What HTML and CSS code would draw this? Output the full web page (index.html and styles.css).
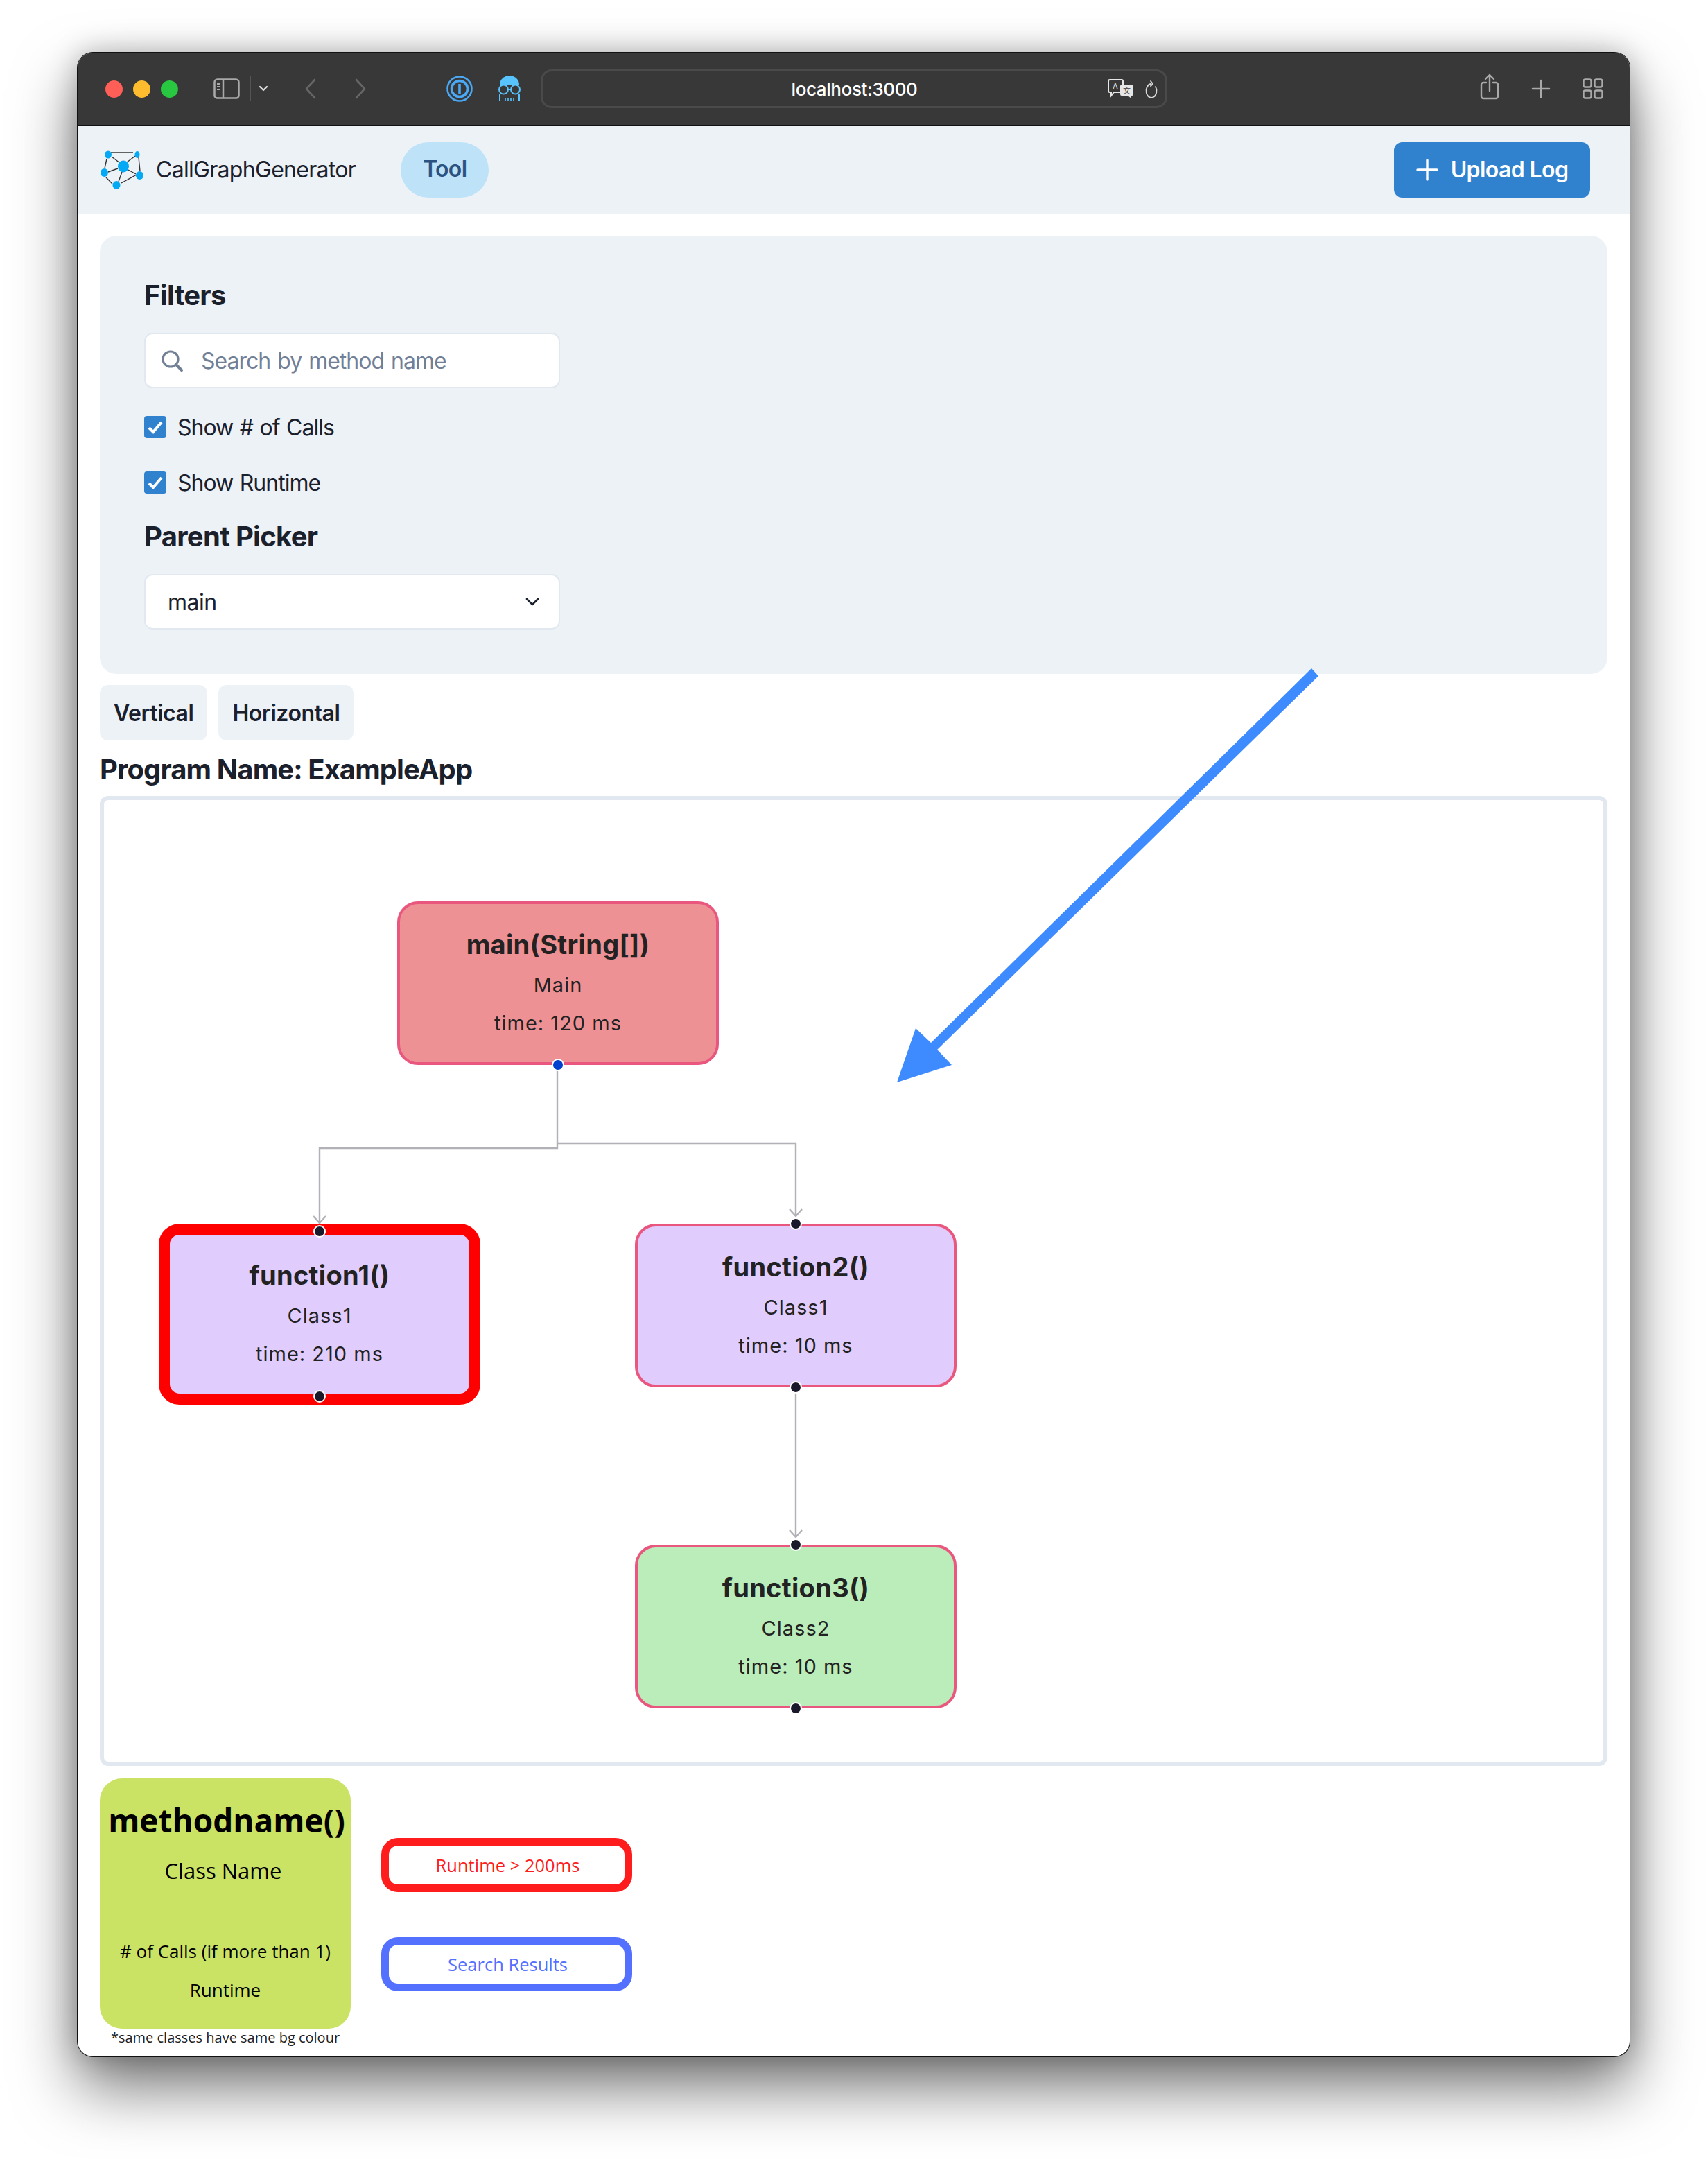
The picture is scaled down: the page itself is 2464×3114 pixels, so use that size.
FILE: index.html
```html
<!DOCTYPE html>
<html lang="en">
<head>
    <meta charset="UTF-8">
    <title>CallGraphGenerator</title>
    <link rel="stylesheet" href="styles.css">
</head>
<body>

    <div class="window">

        <div class="titlebar">
            <div class="lights">
                <span class="light red"></span>
                <span class="light yellow"></span>
                <span class="light green"></span>
            </div>
            <svg class="sidebar-icon" viewBox="0 0 38 30" fill="none" stroke="#a9a9a9" stroke-width="2.5">
                <rect x="1.5" y="1.5" width="35" height="27" rx="4"/>
                <path d="M14 2v26"/>
                <path d="M5 8h5M5 12h5M5 16h5" stroke-width="2"/>
            </svg>
            <span class="bar-sep"></span>
            <svg class="drop-icon" viewBox="0 0 14 10" fill="none" stroke="#d8d8d8" stroke-width="2.4" stroke-linecap="round" stroke-linejoin="round">
                <path d="M2 2l5 5 5-5"/>
            </svg>
            <svg class="back-icon" viewBox="0 0 16 32" fill="none" stroke="#666" stroke-width="2.6" stroke-linecap="round" stroke-linejoin="round">
                <path d="M14 3L2 16l12 13"/>
            </svg>
            <svg class="forward-icon" viewBox="0 0 16 32" fill="none" stroke="#666" stroke-width="2.6" stroke-linecap="round" stroke-linejoin="round">
                <path d="M2 3l12 13L2 29"/>
            </svg>
            <svg class="onepw-icon" viewBox="0 0 38 38" fill="none" stroke="#4aa8f5">
                <circle cx="19" cy="19" r="17.500" stroke-width="2.600"/>
                <circle cx="19" cy="19" r="11.500" stroke-width="3.600"/>
                <path d="M19 12v14" stroke-width="3.600"/>
            </svg>
            <svg class="ghost-icon" viewBox="0 0 36 38" fill="none" stroke="#58c4ff" stroke-width="2">
                <path d="M4 13a14 13 0 0 1 28 0z" fill="#58c4ff" stroke="none"/>
                <circle cx="9.500" cy="20" r="6.500"/>
                <circle cx="26.500" cy="20" r="6.500"/>
                <path d="M16 20h4M4 26v11M32 26v11"/>
                <path d="M12 32v4M16 32v4M20 32v4M24 32v4" stroke-width="1.600"/>
            </svg>
            <div class="url-bar">
                <span class="url-text">localhost:3000</span>
                <svg class="translate-icon" viewBox="0 0 38 28">
                    <path d="M3 1h17a2 2 0 0 1 2 2v14a2 2 0 0 1-2 2H9l-4 5v-5H3a2 2 0 0 1-2-2V3a2 2 0 0 1 2-2z" fill="#383838" stroke="#e6e6e6" stroke-width="2"/>
                    <text x="11" y="15" class="translate-a">A</text>
                    <path d="M20 8h15a2 2 0 0 1 2 2v12a2 2 0 0 1-2 2h-1v4l-5-4h-9a2 2 0 0 1-2-2V10a2 2 0 0 1 2-2z" fill="#e6e6e6"/>
                    <text x="27.500" y="21" class="translate-b">文</text>
                </svg>
                <svg class="reload-icon" viewBox="0 0 20 28" fill="none" stroke="#d8d8d8" stroke-width="1.800" stroke-linecap="round" stroke-linejoin="round">
                    <path d="M16 10a7.500 10 0 1 1-7-4"/>
                    <path d="M9 2l3 4-3 3"/>
                </svg>
            </div>
            <div class="bar-right">
                <svg class="share-icon" viewBox="0 0 28 38" fill="none" stroke="#a9a9a9" stroke-width="2.400" stroke-linecap="round" stroke-linejoin="round">
                    <path d="M9 13H5a3 3 0 0 0-3 3v17a3 3 0 0 0 3 3h18a3 3 0 0 0 3-3V16a3 3 0 0 0-3-3h-4"/>
                    <path d="M14 25V2M8 8l6-6 6 6"/>
                </svg>
                <svg class="plus-icon" viewBox="0 0 28 28" fill="none" stroke="#a9a9a9" stroke-width="2.600" stroke-linecap="round">
                    <path d="M14 2v24M2 14h24"/>
                </svg>
                <svg class="tabs-icon" viewBox="0 0 30 30" fill="none" stroke="#a9a9a9" stroke-width="2.400">
                    <rect x="1.500" y="1.500" width="11" height="11" rx="2.500"/>
                    <rect x="17.500" y="1.500" width="11" height="11" rx="2.500"/>
                    <rect x="1.500" y="17.500" width="11" height="11" rx="2.500"/>
                    <rect x="17.500" y="17.500" width="11" height="11" rx="2.500"/>
                </svg>
            </div>
        </div>

        <nav class="navbar">
            <svg class="logo" viewBox="0 0 64 56" stroke="#333" stroke-width="1.400" fill="#03a9f4">
                <path d="M15 3h32M9 12l-3 14M55 10l2 20M28 18L16 9M38 17L50 8M25 26l-14 5M40 28l11 6M31 31l-5 14M8 39l9 9M30 47l22-12" fill="none"/>
                <g stroke="none">
                    <ellipse cx="11" cy="6" rx="5" ry="5.500"/>
                    <ellipse cx="53" cy="6" rx="3.500" ry="5"/>
                    <ellipse cx="33" cy="23" rx="8" ry="8.500"/>
                    <ellipse cx="5.500" cy="32" rx="5.500" ry="6"/>
                    <ellipse cx="56.500" cy="36" rx="5.500" ry="6"/>
                    <ellipse cx="23" cy="50" rx="5.500" ry="6"/>
                </g>
            </svg>
            <span class="brand">CallGraphGenerator</span>
            <a class="nav-pill">Tool</a>
            <button type="button" class="upload-btn">
                <svg viewBox="0 0 32 32" fill="none" stroke="#fff" stroke-width="3.400" stroke-linecap="round">
                    <path d="M16 2v28M2 16h28"/>
                </svg>
                Upload Log
            </button>
        </nav>

        <main class="content">

            <section class="filters">
                <h2 class="panel-title">Filters</h2>
                <div class="search-box">
                    <svg viewBox="0 0 32 32" fill="none" stroke="#718096" stroke-width="3.200" stroke-linecap="round">
                        <circle cx="14" cy="14" r="11"/>
                        <path d="M22 22l8 8" stroke-width="4"/>
                    </svg>
                    <input type="text" placeholder="Search by method name">
                </div>
                <label class="check-row first">
                    <span class="check-box">
                        <svg viewBox="0 0 32 32" fill="none" stroke="#fff" stroke-width="4"><path d="M7 17l6 6L25 9"/></svg>
                    </span>
                    Show # of Calls
                </label>
                <label class="check-row">
                    <span class="check-box">
                        <svg viewBox="0 0 32 32" fill="none" stroke="#fff" stroke-width="4"><path d="M7 17l6 6L25 9"/></svg>
                    </span>
                    Show Runtime
                </label>
                <h2 class="panel-title parent-title">Parent Picker</h2>
                <div class="select-box">
                    <select>
                        <option>main</option>
                    </select>
                    <svg viewBox="0 0 20 12" fill="none" stroke="#1a202c" stroke-width="2.600" stroke-linecap="round" stroke-linejoin="round">
                        <path d="M2 2l8 8 8-8"/>
                    </svg>
                </div>
            </section>

            <div class="layout-btns">
                <button type="button">Vertical</button>
                <button type="button">Horizontal</button>
            </div>

            <h2 class="program-name">Program Name: ExampleApp</h2>

            <div class="graph">
                <svg class="edges" viewBox="0 0 2163 1387" fill="none" stroke="#b1b1b7" stroke-width="2.400">
                    <path d="M654 380V502H311V611"/>
                    <path d="M302 600l9 10 9-10"/>
                    <path d="M654 495H998V600"/>
                    <path d="M989 590l9 10 9-10"/>
                    <path d="M998 844V1063"/>
                    <path d="M989 1053l9 10 9-10"/>
                </svg>

                <div class="node node-main node-red">
                    <span class="handle bottom blue"></span>
                    <h3>main(String[])</h3>
                    <p>Main</p>
                    <p>time: 120 ms</p>
                </div>
                <div class="node node-one node-purple slow">
                    <span class="handle top"></span>
                    <h3>function1()</h3>
                    <p>Class1</p>
                    <p>time: 210 ms</p>
                    <span class="handle bottom"></span>
                </div>
                <div class="node node-two node-purple">
                    <span class="handle top"></span>
                    <h3>function2()</h3>
                    <p>Class1</p>
                    <p>time: 10 ms</p>
                    <span class="handle bottom"></span>
                </div>
                <div class="node node-three node-green">
                    <span class="handle top"></span>
                    <h3>function3()</h3>
                    <p>Class2</p>
                    <p>time: 10 ms</p>
                    <span class="handle bottom"></span>
                </div>
            </div>

            <div class="legend">
                <div class="legend-left">
                    <div class="legend-card">
                        <div class="legend-title">methodname()</div>
                        <div class="legend-class">Class Name</div>
                        <div class="legend-calls">&#35; of Calls (if more than 1)</div>
                        <div class="legend-runtime">Runtime</div>
                    </div>
                    <div class="legend-note">*same classes have same bg colour</div>
                </div>
                <div class="legend-keys">
                    <div class="key key-red">Runtime &gt; 200ms</div>
                    <div class="key key-blue">Search Results</div>
                </div>
            </div>

        </main>
    </div>

    <svg class="annotation" viewBox="0 0 2464 3114">
        <polygon points="1892,964 1902,975 1352,1514 1373,1536 1294,1561 1321,1483 1343,1504" fill="#3d8bff"/>
    </svg>

</body>
</html>
```

FILE: styles.css
```css
* {
    box-sizing: border-box;
}

html, body {
    margin: 0;
    padding: 0;
}

body {
    height: 3114px;
    overflow: hidden;
    background: #fff;
    font-family: Inter, 'Liberation Sans', sans-serif;
    color: #1a202c;
    padding: 76px 113px 0 112px;
}

h2, h3, p {
    margin: 0;
}

.window {
    width: 2239px;
    height: 2890px;
    background: #fff;
    border-radius: 22px;
    overflow: hidden;
    box-shadow: 0 0 0 1px #111, 0 44px 90px rgba(0, 0, 0, 0.55), 0 0 40px rgba(0, 0, 0, 0.25);
}

/* browser chrome */
.titlebar {
    height: 106px;
    background: #383838;
    border-bottom: 2px solid #111;
    display: flex;
    align-items: center;
    padding: 0 38px 0 40px;
}

.lights {
    display: flex;
    gap: 15px;
}

.light {
    width: 25px;
    height: 25px;
    border-radius: 50%;
}

.light.red { background: #ff5f57; }
.light.yellow { background: #febc2e; }
.light.green { background: #28c840; }

.sidebar-icon {
    width: 38px;
    height: 30px;
    margin-left: 51px;
}

.bar-sep {
    width: 2px;
    height: 36px;
    background: #555;
    margin-left: 14px;
}

.drop-icon {
    width: 14px;
    height: 10px;
    margin-left: 11px;
}

.back-icon, .forward-icon {
    width: 16px;
    height: 32px;
}

.back-icon { margin-left: 53px; }
.forward-icon { margin-left: 56px; }

.onepw-icon {
    width: 38px;
    height: 38px;
    margin-left: 116px;
}

.ghost-icon {
    width: 36px;
    height: 38px;
    margin-left: 35px;
}

.url-bar {
    position: relative;
    width: 904px;
    height: 56px;
    margin-left: 27px;
    border: 3px solid #4a4a4a;
    border-radius: 16px;
    display: flex;
    align-items: center;
    justify-content: center;
}

.url-text {
    color: #fff;
    font-size: 26px;
    font-weight: 500;
    letter-spacing: -0.4px;
    padding-left: 1px;
}

.translate-icon {
    position: absolute;
    left: 815px;
    top: 11px;
    width: 38px;
    height: 28px;
}

.translate-a {
    font-size: 12px;
    fill: #e6e6e6;
    text-anchor: middle;
}

.translate-b {
    font-family: 'Noto Sans CJK SC', sans-serif;
    font-size: 11px;
    fill: #383838;
    text-anchor: middle;
}

.reload-icon {
    position: absolute;
    left: 868px;
    top: 12px;
    width: 20px;
    height: 28px;
}

.bar-right {
    margin-left: auto;
    display: flex;
    align-items: center;
    gap: 46px;
}

.share-icon {
    width: 28px;
    height: 38px;
    margin-bottom: 6px;
}

.plus-icon {
    width: 28px;
    height: 28px;
}

.tabs-icon {
    width: 30px;
    height: 30px;
}

/* app navbar */
.navbar {
    height: 126px;
    background: #edf2f7;
    display: flex;
    align-items: center;
    padding: 0 57px 0 33px;
    letter-spacing: -0.7px;
}

.logo {
    width: 64px;
    height: 56px;
}

.brand {
    margin-left: 16px;
    font-size: 32px;
    line-height: 38px;
}

.nav-pill {
    margin-left: 65px;
    height: 80px;
    padding: 0 32px;
    border-radius: 40px;
    background: #bee3f8;
    color: #2c5282;
    font-size: 32px;
    font-weight: 600;
    line-height: 78px;
}

.upload-btn {
    margin-left: auto;
    height: 80px;
    width: 283px;
    padding-bottom: 2px;
    border: none;
    border-radius: 12px;
    background: #3182ce;
    color: #fff;
    font-family: inherit;
    font-size: 32px;
    font-weight: 600;
    letter-spacing: -0.6px;
    display: flex;
    align-items: center;
    justify-content: center;
    gap: 18px;
}

.upload-btn svg {
    width: 32px;
    height: 32px;
}

.content {
    padding: 32px;
}

/* filters */
.filters {
    background: #edf2f7;
    border-radius: 24px;
    padding: 64px;
    height: 632px;
}

.panel-title {
    font-size: 40px;
    font-weight: 700;
    line-height: 44px;
    letter-spacing: -0.7px;
}

.search-box {
    margin-top: 32px;
    width: 600px;
    height: 80px;
    background: #fff;
    border: 2px solid #e2e8f0;
    border-radius: 12px;
    display: flex;
    align-items: center;
    padding-left: 22px;
}

.search-box svg {
    width: 32px;
    height: 32px;
}

.search-box input {
    margin-left: 26px;
    flex: 1;
    min-width: 0;
    border: none;
    outline: none;
    background: none;
    padding: 0;
    font-family: inherit;
    font-size: 32px;
    letter-spacing: -1px;
    word-spacing: 2px;
}

.search-box input::placeholder {
    color: #718096;
    opacity: 1;
}

.check-row {
    display: flex;
    align-items: center;
    gap: 16px;
    height: 32px;
    margin-top: 48px;
    font-size: 32px;
    letter-spacing: -1px;
    word-spacing: 1.5px;
}

.check-row.first {
    margin-top: 40px;
}

.check-box {
    width: 32px;
    height: 32px;
    border-radius: 4px;
    background: #3182ce;
}

.check-box svg {
    display: block;
}

.parent-title {
    margin-top: 40px;
}

.select-box {
    position: relative;
    margin-top: 32px;
    width: 600px;
    height: 80px;
}

.select-box select {
    appearance: none;
    width: 100%;
    height: 100%;
    background: #fff;
    border: 2px solid #e2e8f0;
    border-radius: 12px;
    padding: 0 32px;
    font-family: inherit;
    font-size: 32px;
    letter-spacing: -0.5px;
    color: #1a202c;
}

.select-box svg {
    position: absolute;
    right: 30px;
    top: 34px;
    width: 20px;
    height: 12px;
}

.layout-btns {
    display: flex;
    gap: 16px;
    margin-top: 16px;
}

.layout-btns button {
    height: 80px;
    padding: 0 20px;
    border: none;
    border-radius: 12px;
    background: #edf2f7;
    color: #1a202c;
    font-family: inherit;
    font-size: 32px;
    font-weight: 600;
    letter-spacing: -0.45px;
}

.program-name {
    margin-top: 20px;
    font-size: 40px;
    font-weight: 700;
    line-height: 44px;
    letter-spacing: -0.9px;
}

/* graph canvas */
.graph {
    position: relative;
    margin-top: 16px;
    height: 1399px;
    border: 6px solid #e2e8f0;
    border-radius: 12px;
}

.edges {
    position: absolute;
    left: 0;
    top: 0;
    width: 2163px;
    height: 1387px;
}

.node {
    position: absolute;
    width: 464px;
    height: 236px;
    border: 4px solid #e9577f;
    border-radius: 30px;
    padding-top: 30px;
    text-align: center;
    color: #222;
}

.node h3 {
    font-size: 38px;
    font-weight: 700;
    line-height: 56px;
    letter-spacing: 0.3px;
    margin-bottom: 3px;
}

.node p {
    font-size: 29px;
    line-height: 55px;
    letter-spacing: 1px;
}

.node-main { left: 423px; top: 146px; }
.node-one { left: 79px; top: 611px; }
.node-two { left: 766px; top: 611px; }
.node-three { left: 766px; top: 1074px; }

.node-red { background: #ee9195; }
.node-purple { background: #e0cdfd; }
.node-green { background: #bbedba; }

.node.slow {
    height: 261px;
    border: 16px solid #ff0000;
    padding-top: 30px;
}

.handle {
    position: absolute;
    left: 50%;
    width: 18px;
    height: 18px;
    margin-left: -9px;
    border: 2px solid #fff;
    border-radius: 50%;
    background: #1a192b;
}

.handle.top { top: -13px; }
.handle.bottom { bottom: -13px; }
.handle.blue { background: #0041d0; }

.slow .handle.top { top: -14px; }
.slow .handle.bottom { bottom: -13px; }

/* legend */
.legend {
    display: flex;
    gap: 44px;
    margin-top: 18px;
    font-family: 'Open Sans', sans-serif;
}

.legend-left {
    width: 362px;
}

.legend-card {
    height: 361px;
    padding-top: 28px;
    background: #cbe365;
    border-radius: 32px;
    text-align: center;
    color: #000;
}

.legend-title {
    font-size: 46px;
    font-weight: 700;
    line-height: 64px;
    white-space: nowrap;
    padding-left: 4px;
}

.legend-class {
    margin-top: 13px;
    font-size: 31px;
    line-height: 56px;
    padding-right: 6px;
}

.legend-calls {
    margin-top: 64px;
    font-size: 26px;
    line-height: 48px;
}

.legend-runtime {
    margin-top: 8px;
    font-size: 26px;
    line-height: 48px;
}

.legend-note {
    margin-top: 2px;
    font-size: 20px;
    line-height: 22px;
    text-align: center;
    white-space: nowrap;
    color: #222;
}

.legend-keys {
    padding-top: 86px;
    display: flex;
    flex-direction: column;
    gap: 65px;
}

.key {
    width: 362px;
    height: 78px;
    border: 11px solid;
    border-radius: 24px;
    display: flex;
    align-items: center;
    justify-content: center;
    font-size: 25.5px;
    padding-left: 3px;
}

.key-red {
    border-color: #ff1c1c;
    color: #ff1c1c;
}

.key-blue {
    border-color: #5470ff;
    color: #5470ff;
}

/* arrow drawn on top of the screenshot */
.annotation {
    position: absolute;
    left: 0;
    top: 0;
    width: 2464px;
    height: 3114px;
    pointer-events: none;
}
```
